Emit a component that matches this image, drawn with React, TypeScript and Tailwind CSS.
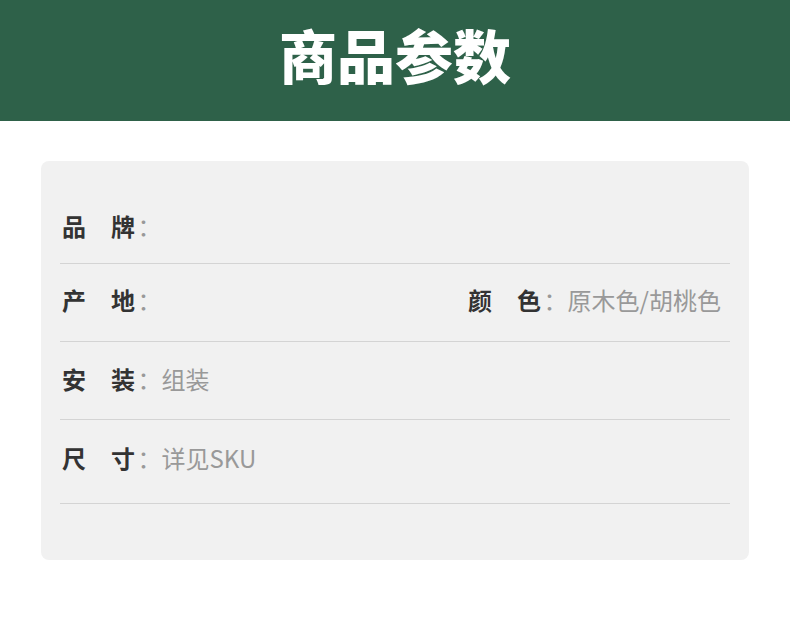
import React from 'react';

type Item = { label: string; value?: string };

const rows: { left: Item; right?: Item; h: string }[] = [
  { left: { label: '品　牌' }, h: 'h-[78px] pt-[2px]' },
  { left: { label: '产　地' }, right: { label: '颜　色', value: '原木色/胡桃色' }, h: 'h-[78px] pb-[5px]' },
  { left: { label: '安　装', value: '组装' }, h: 'h-[78px] pb-[4px]' },
  { left: { label: '尺　寸', value: '详见SKU' }, h: 'h-[84px] pb-[7px]' },
];

const Field: React.FC<{ item: Item }> = ({ item }) => (
  <div className="flex items-center whitespace-nowrap text-[24px] leading-none">
    <span className="font-bold tracking-[0.5px] text-[#333333]">{item.label}</span>
    <span className="ml-[2px] text-[#999999]">：{item.value}</span>
  </div>
);

const App: React.FC = () => {
  return (
    <div className="min-h-[622px] w-[790px] bg-white font-['Noto_Sans_CJK_SC','Noto_Sans',sans-serif]">
      <div className="flex h-[121px] items-center justify-center bg-[#2e6149]">
        <h1 className="pb-[14px] text-[58px] font-black leading-none text-white">商品参数</h1>
      </div>

      <div className="mx-[41px] mt-[40px] rounded-lg bg-[#f1f1f1] px-[19px] pb-[56px] pt-[25px]">
        {rows.map((row, i) => (
          <div
            key={i}
            className={`flex items-center justify-between border-b border-[#d4d4d4] pl-[2px] ${row.h}`}
          >
            <Field item={row.left} />
            {row.right && (
              <div className="pr-[9px]">
                <Field item={row.right} />
              </div>
            )}
          </div>
        ))}
      </div>
    </div>
  );
};

export default App;
